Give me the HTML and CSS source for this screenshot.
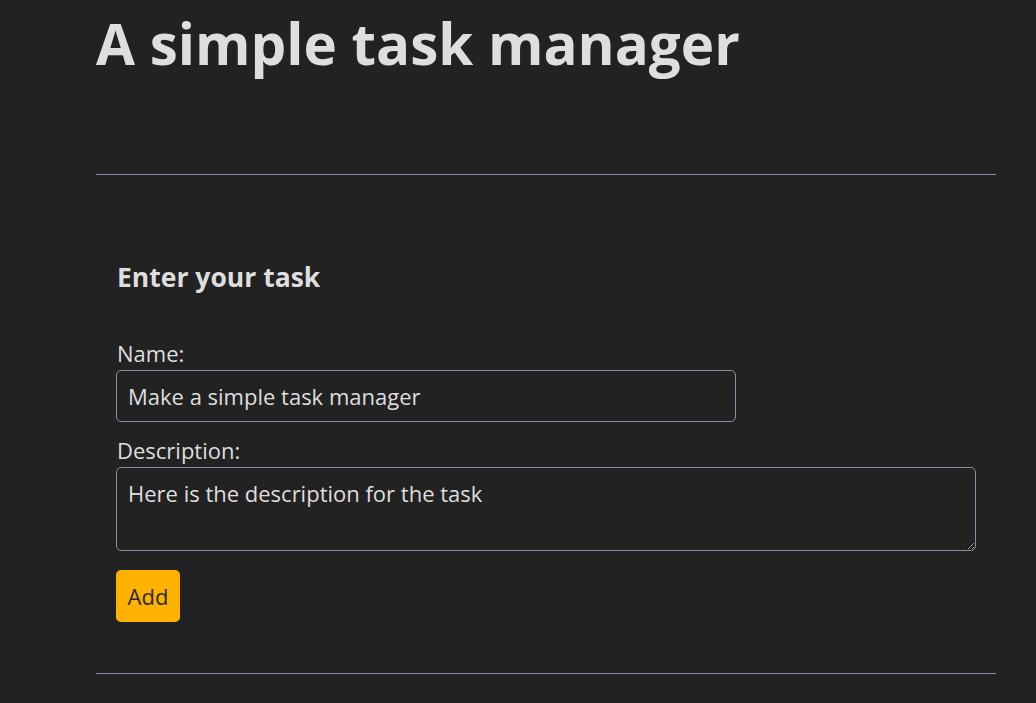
FILE: index.html
```html
<!DOCTYPE html>
<html>
<head>
<meta charset="utf-8">
<link rel="stylesheet" href="styles.css">
</head>
<body>
<main class="page">
  <h1 class="title">A simple task manager</h1>
  <hr class="rule rule-top">
  <section class="task-form">
    <h2 class="form-title">Enter your task</h2>
    <form class="form">
      <label class="label" for="name">Name:</label>
      <input class="input" id="name" type="text" value="Make a simple task manager">
      <label class="label" for="desc">Description:</label>
      <textarea class="textarea" id="desc">Here is the description for the task</textarea>
      <button class="btn" type="button">Add</button>
    </form>
  </section>
  <hr class="rule">
</main>
</body>
</html>
```
FILE: styles.css
```css
html, body {
  margin: 0;
  padding: 0;
  background: #222222;
}
body {
  color: #dedede;
  font-family: "Open Sans", "Noto Sans", sans-serif;
}
.page {
  padding: 0 40px 0 96px;
}
.title {
  margin: 0;
  padding-top: 4px;
  font-size: 56.5px;
  line-height: 80px;
  font-weight: 700;
  color: #dedede;
}
.rule {
  border: 0;
  border-top: 1px solid #8b8ca3;
  margin: 0;
}
.rule-top {
  margin-top: 90px;
}
.task-form {
  padding: 85px 20px 51px 20px;
}
.form-title {
  margin: 0 0 44px 1px;
  font-size: 26.5px;
  font-weight: 700;
  line-height: 34px;
}
.form {
  display: flex;
  flex-direction: column;
  align-items: flex-start;
}
.label {
  font-size: 22px;
  line-height: 30px;
  margin: 0 0 2px 1px;
}
.input, .textarea {
  box-sizing: border-box;
  background: #222222;
  color: #dedede;
  border: 1px solid #8b8ca3;
  border-radius: 5px;
  font-family: inherit;
  font-size: 22px;
  padding: 0 11px;
  margin: 0;
}
.input {
  width: 620px;
  height: 52px;
  margin-bottom: 13px;
}
.textarea {
  display: block;
  width: 860px;
  height: 84px;
  padding-top: 10px;
  line-height: 30px;
  resize: vertical;
}
.btn {
  margin-top: 19px;
  width: 64px;
  height: 52px;
  background: #ffb300;
  color: #2a2a2a;
  border: 0;
  border-radius: 5px;
  font-family: inherit;
  font-size: 22px;
  font-weight: 400;
  padding: 0;
}
```
